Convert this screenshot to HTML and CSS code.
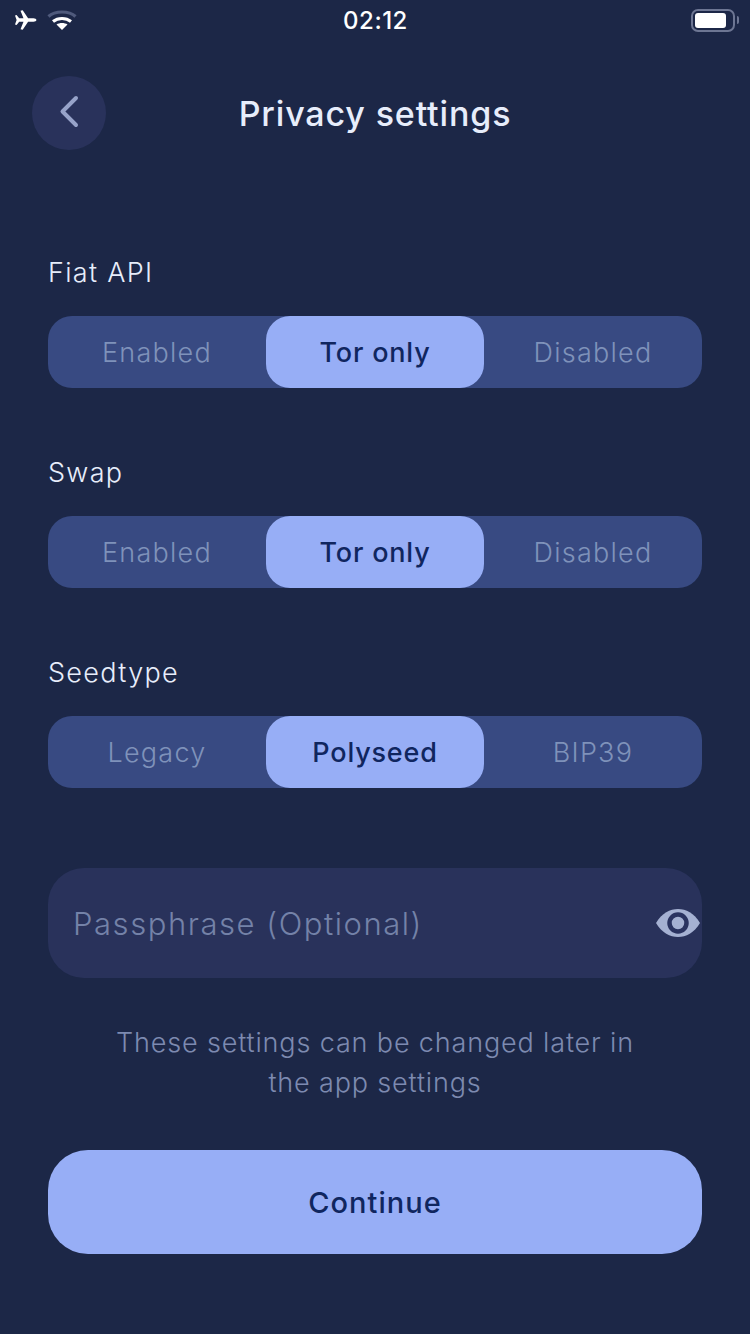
FILE: index.html
```html
<!DOCTYPE html>
<html lang="en">
  <head>
    <meta charset="UTF-8">
    <meta name="viewport" content="width=device-width, initial-scale=1.0">
    <title>Privacy settings</title>
    <link rel="stylesheet" href="styles.css">
  </head>
  <body>
    <div class="status-bar">
      <div class="status-left">
        <svg class="icon-plane" width="24" height="22" viewBox="0 0 24 22"><path fill="#fff" d="M1 6.500 L2.600 6 L5.200 9.300 L9.500 9.300 L6.500 1.800 L8.700 1.200 L14.100 9.300 L19.500 9.300 C21 9.300 22.400 10 22.400 11 C22.400 12 21 12.700 19.500 12.700 L14.100 12.700 L8.700 20.800 L6.500 20.200 L9.500 12.700 L5.200 12.700 L2.600 16 L1 15.500 L2.600 11 Z"/></svg>
        <svg class="icon-wifi" width="30" height="22" viewBox="0 0 30 22">
          <path fill="none" stroke="#4f5a7c" stroke-width="3.200" d="M1.500 7.500 C8 1.500 22 1.500 28.500 7.500"/>
          <path fill="none" stroke="#fff" stroke-width="3.200" d="M6 12.500 C11 8.500 19 8.500 24 12.500"/>
          <path fill="#fff" d="M15 21 L9.500 15.500 C12.500 13.500 17.500 13.500 20.500 15.500 Z"/>
        </svg>
      </div>
      <div class="status-time">02:12</div>
      <div class="status-right">
        <div class="battery"><div class="battery-level"></div></div>
        <div class="battery-tip"></div>
      </div>
    </div>

    <div class="header">
      <button class="back-btn" aria-label="Back">
        <svg width="24" height="34" viewBox="0 0 24 34"><path fill="none" stroke="#97a3c9" stroke-width="4" stroke-linecap="round" stroke-linejoin="round" d="M18 3 L4.500 16.500 L18 30"/></svg>
      </button>
      <h1>Privacy settings</h1>
    </div>

    <div class="section">
      <div class="label">Fiat API</div>
      <div class="segmented">
        <div class="seg">Enabled</div>
        <div class="seg seg-active">Tor only</div>
        <div class="seg">Disabled</div>
      </div>
    </div>

    <div class="section">
      <div class="label">Swap</div>
      <div class="segmented">
        <div class="seg">Enabled</div>
        <div class="seg seg-active">Tor only</div>
        <div class="seg">Disabled</div>
      </div>
    </div>

    <div class="section">
      <div class="label">Seedtype</div>
      <div class="segmented">
        <div class="seg">Legacy</div>
        <div class="seg seg-active">Polyseed</div>
        <div class="seg">BIP39</div>
      </div>
    </div>

    <div class="passphrase">
      <span>Passphrase (Optional)</span>
      <svg class="icon-eye" width="44" height="30" viewBox="0 0 44 30">
        <path fill="#a5b1d2" d="M0 15 C6 5 14 1 22 1 C30 1 38 5 44 15 C38 25 30 29 22 29 C14 29 6 25 0 15 Z"/>
        <circle cx="22" cy="15" r="8.500" fill="#a5b1d2" stroke="#2a3360" stroke-width="4.500"/>
      </svg>
    </div>

    <p class="note">These settings can be changed later in<br>the app settings</p>

    <button class="continue">Continue</button>
  </body>
</html>
```

FILE: styles.css
```css
* { box-sizing: border-box; }

body {
  margin: 0;
  width: 750px;
  height: 1334px;
  overflow: hidden;
  background-color: #1c2747;
  font-family: 'Inter', 'Noto Sans', sans-serif;
  color: #e7edfb;
  padding: 0 48px;
}

.status-bar {
  display: flex;
  align-items: center;
  justify-content: space-between;
  height: 40px;
  margin: 0 -48px;
  padding: 0 11px 0 14px;
}
.status-left { display: flex; align-items: center; gap: 9px; width: 100px; }
.status-time { font-size: 24px; font-weight: 500; color: #fff; letter-spacing: 0.500px; margin-right: 2px; }
.status-right { display: flex; align-items: center; justify-content: flex-end; width: 100px; gap: 2px; }
.battery { width: 44px; height: 23px; border: 2.500px solid #6d7693; border-radius: 7px; padding: 2px; }
.battery-level { width: 31px; height: 15px; background-color: #fff; border-radius: 3px; }
.battery-tip { width: 2px; height: 8px; background-color: #6d7693; border-radius: 0 2px 2px 0; }

.header {
  display: flex;
  align-items: center;
  justify-content: center;
  height: 74px;
  margin: 36px 0 0;
  position: relative;
}
.header h1 { margin: 0; font-size: 34px; font-weight: 500; color: #e7edfb; letter-spacing: 0.85px; }
.back-btn {
  position: absolute;
  left: -16px;
  top: 0;
  width: 74px;
  height: 74px;
  border: none;
  border-radius: 50%;
  background-color: #29325b;
  display: flex;
  align-items: center;
  justify-content: center;
  padding: 0 0 2px 2px;
}

.section { margin-bottom: 67px; }
.header + .section { margin-top: 105px; }

.label { height: 36px; line-height: 36px; font-size: 27px; font-weight: 300; letter-spacing: 1.300px; color: #e7edfb; margin-bottom: 25px; }

.segmented {
  display: grid;
  grid-template-columns: 218px 218px 218px;
  height: 72px;
  background-color: #384a82;
  border-radius: 24px;
}
.seg {
  display: flex;
  align-items: center;
  justify-content: center;
  font-size: 27px;
  font-weight: 300;
  letter-spacing: 1.250px;
  color: #7f92ba;
}
.seg-active {
  background-color: #97aef6;
  border-radius: 24px;
  color: #10265f;
  font-weight: 500;
  letter-spacing: 0.8px;
}

.passphrase {
  display: flex;
  align-items: center;
  justify-content: space-between;
  height: 110px;
  margin-top: 80px;
  padding: 0 2px 0 25px;
  background-color: #29325b;
  border-radius: 36px;
  font-size: 31px;
  font-weight: 300;
  letter-spacing: 1.550px;
  color: #7482a8;
}

.note {
  margin: 45px 0 0;
  text-align: center;
  font-size: 27px;
  font-weight: 300;
  line-height: 40px;
  letter-spacing: 0.850px;
  color: #7d8ab0;
}

.continue {
  display: block;
  width: 100%;
  height: 104px;
  margin-top: 47px;
  border: none;
  border-radius: 40px;
  background-color: #97aef6;
  color: #10265f;
  font-family: inherit;
  font-size: 29px;
  font-weight: 500;
  letter-spacing: 1px;
}
```
